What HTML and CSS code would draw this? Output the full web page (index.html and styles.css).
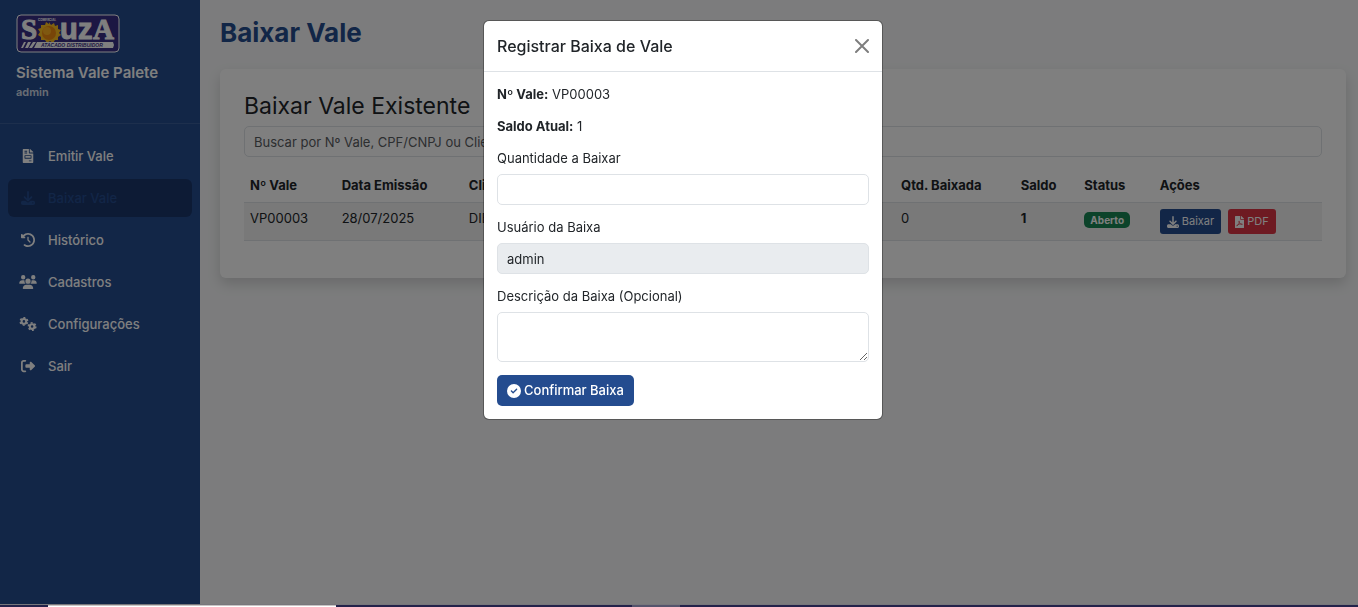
FILE: index.html
```html
<!DOCTYPE html>
<html lang="pt-BR">
<head>
<meta charset="utf-8">
<meta name="viewport" content="width=device-width, initial-scale=1">
<title>Baixar Vale - Sistema Vale Palete</title>
<link rel="stylesheet" href="styles.css">
</head>
<body>
<svg class="sprite" aria-hidden="true">
  <symbol id="i-invoice" viewBox="0 0 384 512"><path d="M288 256H96v64h192v-64zm89-151L279.100 7c-4.500-4.500-10.600-7-17-7H256v128h128v-6.100c0-6.300-2.500-12.400-7-16.900zm-153 31V0H24C10.700 0 0 10.700 0 24v464c0 13.300 10.700 24 24 24h336c13.300 0 24-10.700 24-24V160H248c-13.200 0-24-10.800-24-24zM64 72c0-4.420 3.580-8 8-8h80c4.420 0 8 3.580 8 8v16c0 4.420-3.580 8-8 8H72c-4.420 0-8-3.580-8-8V72zm0 64c0-4.420 3.580-8 8-8h80c4.420 0 8 3.580 8 8v16c0 4.420-3.580 8-8 8H72c-4.420 0-8-3.580-8-8v-16zm256 304c0 4.420-3.580 8-8 8h-80c-4.420 0-8-3.580-8-8v-16c0-4.420 3.580-8 8-8h80c4.420 0 8 3.580 8 8v16zm0-200v96c0 8.840-7.160 16-16 16H80c-8.840 0-16-7.160-16-16v-96c0-8.840 7.160-16 16-16h224c8.840 0 16 7.160 16 16z"/></symbol>
  <symbol id="i-download" viewBox="0 0 512 512"><path d="M288 32c0-17.700-14.300-32-32-32s-32 14.300-32 32V274.700l-73.400-73.400c-12.500-12.500-32.800-12.500-45.300 0s-12.500 32.800 0 45.300l128 128c12.500 12.500 32.800 12.500 45.300 0l128-128c12.500-12.500 12.500-32.800 0-45.300s-32.800-12.500-45.300 0L288 274.700V32zM64 352c-35.300 0-64 28.700-64 64v32c0 35.300 28.700 64 64 64H448c35.300 0 64-28.700 64-64V416c0-35.300-28.700-64-64-64H346.500l-45.300 45.300c-25 25-65.500 25-90.500 0L165.500 352H64zm368 56a24 24 0 1 1 0 48 24 24 0 1 1 0-48z"/></symbol>
  <symbol id="i-history" viewBox="0 0 512 512"><path d="M75 75L41 41C25.900 25.900 0 36.600 0 57.900V168c0 13.300 10.700 24 24 24H134.100c21.400 0 32.100-25.900 17-41l-30.800-30.800C155 85.500 203 64 256 64c106 0 192 86 192 192s-86 192-192 192c-40.800 0-78.600-12.700-109.700-34.400c-14.500-10.100-34.400-6.600-44.600 7.900s-6.600 34.400 7.900 44.600C151.200 495 201.700 512 256 512c141.400 0 256-114.600 256-256S397.400 0 256 0C185.300 0 121.300 28.700 75 75zm181 53c-13.300 0-24 10.700-24 24V256c0 6.400 2.500 12.500 7 17l72 72c9.400 9.400 24.600 9.400 33.900 0s9.400-24.600 0-33.900l-65-65V152c0-13.300-10.700-24-24-24z"/></symbol>
  <symbol id="i-users" viewBox="0 0 640 512"><path d="M144 0a80 80 0 1 1 0 160A80 80 0 1 1 144 0zM512 0a80 80 0 1 1 0 160A80 80 0 1 1 512 0zM0 298.700C0 239.800 47.800 192 106.700 192h42.700c15.900 0 31 3.500 44.600 9.700c-1.300 7.200-1.900 14.700-1.900 22.300c0 38.200 16.800 72.500 43.300 96H21.300C9.600 320 0 310.400 0 298.700zM405.300 320h-.7c26.600-23.500 43.300-57.800 43.300-96c0-7.600-.7-15-1.900-22.300c13.600-6.300 28.700-9.700 44.600-9.700h42.700C592.200 192 640 239.800 640 298.700c0 11.800-9.600 21.300-21.300 21.300H405.300zM224 224a96 96 0 1 1 192 0 96 96 0 1 1-192 0zM128 485.300C128 411.700 187.700 352 261.300 352H378.700C452.300 352 512 411.700 512 485.300c0 14.700-11.900 26.700-26.700 26.700H154.700c-14.700 0-26.700-11.900-26.700-26.700z"/></symbol>
  <symbol id="i-gears" viewBox="0 0 640 512">
    <g fill="none" stroke="currentColor">
      <circle cx="170" cy="160" r="85" stroke-width="76"/>
      <circle cx="170" cy="160" r="136" stroke-width="56" stroke-dasharray="71.200 71.200" stroke-dashoffset="-35"/>
      <circle cx="470" cy="350" r="85" stroke-width="76"/>
      <circle cx="470" cy="350" r="136" stroke-width="56" stroke-dasharray="71.200 71.200"/>
    </g>
  </symbol>
  <symbol id="i-exit" viewBox="0 0 512 512"><path d="M377.900 105.900L500.700 228.700c7.200 7.200 11.300 17.100 11.300 27.300s-4.100 20.100-11.300 27.300L377.900 406.100c-6.400 6.400-15 9.900-24 9.900c-18.700 0-33.900-15.200-33.900-33.900l0-62.100-128 0c-17.700 0-32-14.300-32-32l0-64c0-17.700 14.300-32 32-32l128 0 0-62.100c0-18.700 15.200-33.900 33.900-33.900c9 0 17.600 3.600 24 9.900zM160 96L96 96c-17.700 0-32 14.300-32 32l0 256c0 17.700 14.300 32 32 32l64 0c17.700 0 32 14.300 32 32s-14.300 32-32 32l-64 0c-53 0-96-43-96-96L0 128C0 75 43 32 96 32l64 0c17.700 0 32 14.300 32 32s-14.300 32-32 32z"/></symbol>
  <symbol id="i-pdf" viewBox="0 0 384 512">
    <path d="M24 0h200v136c0 13 11 24 24 24h136v328c0 13-11 24-24 24H24c-13 0-24-11-24-24V24C0 11 11 0 24 0zM256 0h6c6 0 12 3 17 7l98 98c4 5 7 11 7 17v6H256z"/>
    <path d="M82 424C150 380 190 290 182 222C178 196 158 216 172 256C196 322 240 366 302 366C332 360 316 332 270 334C196 338 130 362 92 390C68 412 72 432 82 424z" fill="none" stroke="#dc3545" stroke-width="28"/>
  </symbol>
  <symbol id="i-check" viewBox="0 0 512 512"><path d="M256 512A256 256 0 1 0 256 0a256 256 0 1 0 0 512zM369 209L241 337c-9.400 9.400-24.600 9.400-33.900 0l-64-64c-9.400-9.400-9.400-24.600 0-33.900s24.600-9.400 33.900 0l47 47L335 175c9.400-9.400 24.600-9.400 33.900 0s9.400 24.600 0 33.900z"/></symbol>
</svg>

<div class="app">
  <aside class="sidebar">
    <header class="brand">
      <svg class="logo" viewBox="0 0 104 39" role="img" aria-label="Souza Atacado Distribuidor">
        <rect class="logo-frame" x="1" y="1" width="102" height="37" rx="4"/>
        <g class="logo-name">
          <text x="5" y="25">S</text>
          <text class="logo-sans" x="44" y="25">u</text>
          <text class="logo-sans" x="62" y="25">z</text>
          <text x="77" y="25">A</text>
        </g>
        <path fill="#ffc020" d="M33 8l2 3 3-2 1 3 3-1v4l3 1-2 3 2 2-3 2v3l-3 0-2 3-3-2-3 2-2-3-4 0 0-3-3-2 2-3-2-3 3-1 0-3 4 0 1-3 3 2z"/>
        <circle cx="33" cy="19" r="7" fill="#f08a10"/>
        <circle cx="31" cy="17" r="4" fill="#ffb020"/>
        <text class="logo-top" x="22" y="7">COMERCIAL</text>
        <path fill="#fff" d="M21 28h76l1 3-1 3H18zM8 28h2l-3 6H5zM12 28h3l-3 6H9zM17 28h3l-4 6h-3z"/>
        <text class="logo-sub" x="25" y="33">ATACADO DISTRIBUIDOR</text>
      </svg>
      <strong class="brand-title">Sistema Vale Palete</strong>
      <small class="brand-user">admin</small>
    </header>
    <nav class="menu">
      <a href="#"><svg class="icon"><use href="#i-invoice"/></svg>Emitir Vale</a>
      <a href="#" class="active" aria-current="page"><svg class="icon"><use href="#i-download"/></svg>Baixar Vale</a>
      <a href="#"><svg class="icon"><use href="#i-history"/></svg>Histórico</a>
      <a href="#"><svg class="icon"><use href="#i-users"/></svg>Cadastros</a>
      <a href="#"><svg class="icon"><use href="#i-gears"/></svg>Configurações</a>
      <a href="#"><svg class="icon"><use href="#i-exit"/></svg>Sair</a>
    </nav>
  </aside>

  <main class="content">
    <h1>Baixar Vale</h1>
    <section class="card">
      <h2>Baixar Vale Existente</h2>
      <input class="field" type="search" aria-label="Buscar vale" placeholder="Buscar por Nº Vale, CPF/CNPJ ou Cliente">
      <table class="vales">
        <colgroup><col class="c-num"><col class="c-data"><col class="c-cliente"><col class="c-qtd"><col class="c-saldo"><col class="c-status"><col class="c-acoes"></colgroup>
        <thead>
          <tr><th>Nº Vale</th><th>Data Emissão</th><th>Cliente</th><th>Qtd. Baixada</th><th>Saldo</th><th>Status</th><th>Ações</th></tr>
        </thead>
        <tbody>
          <tr>
            <td>VP00003</td><td>28/07/2025</td><td>DIE</td><td>0</td><td><strong>1</strong></td>
            <td><span class="badge">Aberto</span></td>
            <td><div class="actions">
              <button class="btn-sm primary" type="button"><svg class="icon-sm"><use href="#i-download"/></svg>Baixar</button>
              <button class="btn-sm danger" type="button"><svg class="icon-sm narrow"><use href="#i-pdf"/></svg>PDF</button>
            </div></td>
          </tr>
        </tbody>
      </table>
    </section>
  </main>
</div>

<div class="backdrop">
  <div class="modal" role="dialog" aria-modal="true" aria-labelledby="modal-title">
    <header class="modal-header">
      <h2 id="modal-title">Registrar Baixa de Vale</h2>
      <button class="close" type="button" aria-label="Fechar"><svg viewBox="0 0 14 14"><path d="M1 1L13 13M13 1L1 13"/></svg></button>
    </header>
    <form class="modal-body">
      <p><strong>Nº Vale:</strong> VP00003</p>
      <p><strong>Saldo Atual:</strong> 1</p>
      <div class="group">
        <label for="quantidade">Quantidade a Baixar</label>
        <input class="field" id="quantidade" type="text" inputmode="numeric">
      </div>
      <div class="group">
        <label for="usuario">Usuário da Baixa</label>
        <input class="field" id="usuario" type="text" value="admin" readonly>
      </div>
      <div class="group">
        <label for="descricao">Descrição da Baixa (Opcional)</label>
        <textarea class="field" id="descricao"></textarea>
      </div>
      <button class="btn" type="submit"><svg class="icon-btn"><use href="#i-check"/></svg>Confirmar Baixa</button>
    </form>
  </div>
</div>

<footer class="taskbar"><span class="task-search"></span><span class="task-app"></span></footer>
</body>
</html>
```

FILE: styles.css
```css
* { box-sizing: border-box; }

body {
  margin: 0;
  font: 400 13px/19px Inter, "Liberation Sans", sans-serif;
  color: #212529;
  background: #f8f9fa;
}

h1, h2, p { margin: 0; }
strong { font-weight: 700; }
button, input, textarea { font: inherit; color: inherit; }
button { cursor: pointer; }
svg { fill: currentColor; flex: none; }
.sprite { position: absolute; width: 0; height: 0; }

.app { display: flex; min-height: 100vh; }

/* Sidebar */
.sidebar { flex: none; width: 200px; background: #244c8f; color: #fff; }
.brand {
  display: flex;
  flex-direction: column;
  padding: 14px 16px 21px;
  border-bottom: 1px solid rgba(255, 255, 255, .1);
}
.logo { width: 104px; height: 39px; margin-bottom: 10px; }
.logo-frame { fill: #382e86; stroke: #fff; stroke-width: 1; }
.logo-name { fill: #fff; stroke: #fff; stroke-width: 1; font: 700 29px "Liberation Serif", serif; }
.logo-sans { font-family: "Liberation Sans", sans-serif; }
.logo-top { fill: #fff; font: 700 3px Inter, sans-serif; }
.logo-sub { fill: #382e86; font: italic 700 5px "Liberation Sans", sans-serif; }
.brand-title { font-size: 15px; line-height: 20px; font-weight: 600; }
.brand-user { font-size: 11px; line-height: 19px; font-weight: 600; opacity: .8; }

.menu { display: flex; flex-direction: column; gap: 4px; padding: 13px 8px; }
.menu a {
  display: flex;
  align-items: center;
  gap: 10px;
  height: 38px;
  padding: 0 10px;
  border-radius: 6px;
  color: #fff;
  font-weight: 500;
  text-decoration: none;
}
.menu a.active { background: #1b366b; color: #244c8f; }
.icon { width: 20px; height: 14px; }

/* Page */
.content { flex: 1; min-width: 0; padding: 16px 12px 16px 20px; }
h1 { font-size: 26px; line-height: 33px; font-weight: 700; color: #244c8f; }
.card {
  margin-top: 20px;
  padding: 24px 24px 37px;
  border-radius: 6px;
  background: #fff;
  box-shadow: 0 6px 13px rgba(0, 0, 0, .15);
}
.card h2 { margin-bottom: 6px; font-size: 23px; line-height: 27px; font-weight: 400; }

.field {
  display: block;
  width: 100%;
  height: 31px;
  padding: 5px 9px;
  border: 1px solid #dee2e6;
  border-radius: 5px;
  background: #fff;
  outline: 0;
}
.field::placeholder { color: #595c5f; opacity: 1; }
.field[readonly] { background: #e9ecef; }
textarea.field { height: 50px; resize: vertical; }

.vales { width: 100%; margin-top: 13px; border-collapse: collapse; table-layout: fixed; }
.vales th, .vales td {
  padding: 6px;
  border-bottom: 1px solid #dee2e6;
  text-align: left;
  vertical-align: top;
}
.vales th { padding-bottom: 7px; font-weight: 700; }
.vales td { background: #f2f2f2; }
.c-num { width: 8.5%; }
.c-data { width: 11.8%; }
.c-cliente { width: 40.1%; }
.c-qtd { width: 11.1%; }
.c-saldo { width: 5.9%; }
.c-status { width: 7%; }
.c-acoes { width: 15.6%; }

.badge {
  display: inline-block;
  padding: 0 6px;
  margin-top: 3px;
  border-radius: 5px;
  background: #198754;
  color: #fff;
  font-size: 10px;
  line-height: 16px;
  font-weight: 700;
  vertical-align: top;
}
.actions { display: flex; gap: 7px; }
.btn-sm {
  display: flex;
  align-items: center;
  gap: 3px;
  height: 25px;
  padding: 0 7px;
  border: 0;
  border-radius: 3px;
  color: #fff;
  font-size: 11px;
  line-height: 17px;
}
.primary { background: #244c8f; }
.danger { background: #dc3545; }
.icon-sm { width: 12px; height: 12px; }
.icon-sm.narrow { width: 9px; }

/* Modal */
.backdrop {
  position: fixed;
  inset: 0;
  display: flex;
  justify-content: center;
  align-items: flex-start;
  padding: 20px 0 20px 8px;
  background: rgba(0, 0, 0, .5);
}
.modal {
  width: 100%;
  max-width: 400px;
  border: 1px solid rgba(0, 0, 0, .3);
  border-radius: 6px;
  background: #fff;
  background-clip: padding-box;
}
.modal-header {
  display: flex;
  align-items: center;
  justify-content: space-between;
  padding: 15px 13px;
  border-bottom: 1px solid #dee2e6;
}
.modal-header h2 { font-size: 16px; line-height: 20px; font-weight: 500; }
.close { display: flex; padding: 0; border: 0; background: none; opacity: .5; }
.close svg { width: 14px; height: 14px; fill: none; stroke: #000; stroke-width: 2; stroke-linecap: round; }
.modal-body { padding: 13px; }
.modal-body p, .group { margin-bottom: 13px; }
.group label { display: block; margin-bottom: 6px; }
.btn {
  display: flex;
  align-items: center;
  gap: 3px;
  height: 31px;
  padding: 0 10px;
  border: 0;
  border-radius: 5px;
  background: #244c8f;
  color: #fff;
  font-weight: 500;
}
.icon-btn { width: 14px; height: 14px; }

/* System bar along the window's bottom edge */
.taskbar {
  position: fixed;
  inset: auto 0 0;
  display: flex;
  height: 3px;
  padding-left: 48px;
  border-top: 1px solid #77777b;
  background: #23224a;
}
.task-search { width: 288px; border-top: 1px solid #c8c4c4; background: #fff; }
.task-app { width: 48px; margin-left: 296px; background: #55546c; }
```
